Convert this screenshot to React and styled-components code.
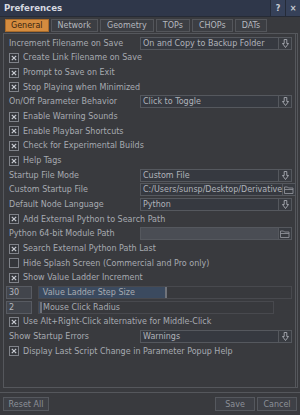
import React from 'react';
import styled, { createGlobalStyle } from 'styled-components';

const GlobalStyle = createGlobalStyle`
  html, body {
    margin: 0;
    padding: 0;
    background: #393a3e;
  }
  * {
    box-sizing: border-box;
  }
`;

const Window = styled.div`
  width: 300px;
  height: 415px;
  display: flex;
  flex-direction: column;
  background: #393a3e;
  font-family: 'DejaVu Sans', Verdana, sans-serif;
  font-size: 8px;
  color: #aeb1b8;
  overflow: hidden;
`;

const TitleBar = styled.div`
  height: 17px;
  display: flex;
  align-items: stretch;
  background: #2f374a;
  border-bottom: 1px solid #262b36;
`;

const Title = styled.div`
  flex: 1;
  display: flex;
  align-items: center;
  padding-left: 4px;
  font-size: 8.6px;
  font-weight: bold;
  color: #d6d9e0;
`;

const TitleButton = styled.div`
  width: 15px;
  display: flex;
  align-items: center;
  justify-content: center;
  background: #364159;
  border-left: 1px solid #252b38;
  color: #c9ccd3;
  font-weight: bold;
  font-size: 8px;
`;

const TabBar = styled.div`
  display: flex;
  gap: 2px;
  padding: 2px 5px 1px;
`;

const Tab = styled.div`
  height: 13px;
  padding: 0 ${({ $active }) => ($active ? 5 : 6)}px;
  display: flex;
  align-items: center;
  border: 1px solid ${({ $active }) => ($active ? '#a86a2a' : '#54565b')};
  background: ${({ $active }) => ($active ? '#d48c3f' : '#3c3e43')};
  color: ${({ $active }) => ($active ? '#3a2410' : '#b5b8bf')};
`;

const Panel = styled.div`
  flex: 1;
  margin: 0 2px 0 3px;
  padding: 2px 3px 0 5px;
  border: 1px solid #55575c;
  border-right-width: 3px;
  border-right-style: double;
  display: flex;
  flex-direction: column;
`;

const Row = styled.div`
  height: 14.67px;
  display: grid;
  grid-template-columns: 131px 1fr;
  align-items: center;
  white-space: nowrap;
`;

const CheckRow = styled.div`
  height: 14.67px;
  display: flex;
  align-items: center;
  gap: 4px;
  white-space: nowrap;
`;

const Label = styled.span`
  color: #a7aab1;
`;

const Box = styled.span`
  width: 10px;
  height: 10px;
  border: 1px solid #7f8289;
  background: #34363b;
  display: flex;
  align-items: center;
  justify-content: center;
`;

const Field = styled.div`
  height: 13px;
  display: flex;
  border: 1px solid #55585e;
  background: ${({ $light }) => ($light ? '#4a4d54' : '#363940')};
  color: #b0b3ba;
`;

const FieldText = styled.div`
  flex: 1;
  padding-left: 2px;
  display: flex;
  align-items: center;
  overflow: hidden;
`;

const FieldButton = styled.div`
  width: 13px;
  display: flex;
  align-items: center;
  justify-content: center;
  border-left: 1px solid #55585e;
  background: #383b41;
`;

const LadderRow = styled.div`
  height: 14.67px;
  display: flex;
  align-items: center;
  gap: 6px;
  margin-left: -3px;
`;

const NumBox = styled.div`
  width: 26px;
  height: 13px;
  border: 1px solid #585b62;
  background: #42454c;
  display: flex;
  align-items: center;
  padding-left: 2px;
  color: #b3b6bd;
`;

const Slider = styled.div`
  position: relative;
  height: 13px;
  width: ${({ $width }) => $width}px;
  border: 1px solid #48494e;
  background: #38393d;
  display: flex;
  align-items: center;
`;

const SliderFill = styled.div`
  position: absolute;
  left: 0;
  top: 0;
  bottom: 0;
  background: #3b4a5f;
  border-right: 2px solid #70737a;
`;

const SliderLabel = styled.span`
  position: relative;
  padding-left: 4px;
  color: #a7aab1;
`;

const Footer = styled.div`
  margin-top: 4px;
  border-top: 1px solid #55575c;
  height: 23px;
  display: flex;
  align-items: center;
  padding: 0 3px;
  gap: 2px;
`;

const Button = styled.div`
  height: 14px;
  width: ${({ $width }) => $width}px;
  display: flex;
  align-items: center;
  justify-content: center;
  border: 1px solid #55585e;
  background: #3e4046;
  color: #8c9098;
`;

const Spacer = styled.div`
  flex: 1;
`;

function Cross() {
  return (
    <svg width="6" height="6" viewBox="0 0 6 6">
      <path d="M0.8 0.8 L5.2 5.2 M5.2 0.8 L0.8 5.2" stroke="#c9ccd3" strokeWidth="1.2" />
    </svg>
  );
}

function DownArrow() {
  return (
    <svg width="7" height="9" viewBox="0 0 7 9">
      <path
        d="M2.2 0.5 H4.8 V4.5 H6.5 L3.5 8.5 L0.5 4.5 H2.2 Z"
        fill="none"
        stroke="#a9acb3"
        strokeWidth="0.9"
      />
    </svg>
  );
}

function Folder() {
  return (
    <svg width="10" height="8" viewBox="0 0 10 8">
      <path
        d="M0.5 1 H3.5 L4.5 2 H9 V7.5 H0.5 Z M0.5 3.5 H9"
        fill="none"
        stroke="#8e9198"
        strokeWidth="0.9"
      />
    </svg>
  );
}

function Check({ checked = true, children }) {
  return (
    <CheckRow>
      <Box>{checked && <Cross />}</Box>
      <Label>{children}</Label>
    </CheckRow>
  );
}

function Menu({ label, value }) {
  return (
    <Row>
      <Label>{label}</Label>
      <Field>
        <FieldText>{value}</FieldText>
        <FieldButton>
          <DownArrow />
        </FieldButton>
      </Field>
    </Row>
  );
}

function FileField({ label, value, light }) {
  return (
    <Row>
      <Label>{label}</Label>
      <Field $light={light}>
        <FieldText>{value}</FieldText>
        <FieldButton>
          <Folder />
        </FieldButton>
      </Field>
    </Row>
  );
}

function Ladder({ value, label, width, fill }) {
  return (
    <LadderRow>
      <NumBox>{value}</NumBox>
      <Slider $width={width}>
        <SliderFill style={{ width: fill }} />
        <SliderLabel>{label}</SliderLabel>
      </Slider>
    </LadderRow>
  );
}

const tabs = ['General', 'Network', 'Geometry', 'TOPs', 'CHOPs', 'DATs'];

export default function App() {
  return (
    <>
      <GlobalStyle />
      <Window>
        <TitleBar>
          <Title>Preferences</Title>
          <TitleButton>?</TitleButton>
          <TitleButton>×</TitleButton>
        </TitleBar>
        <TabBar>
          {tabs.map((t, i) => (
            <Tab key={t} $active={i === 0}>
              {t}
            </Tab>
          ))}
        </TabBar>
        <Panel>
          <Menu label="Increment Filename on Save" value="On and Copy to Backup Folder" />
          <Check>Create Link Filename on Save</Check>
          <Check>Prompt to Save on Exit</Check>
          <Check>Stop Playing when Minimized</Check>
          <Menu label="On/Off Parameter Behavior" value="Click to Toggle" />
          <Check>Enable Warning Sounds</Check>
          <Check>Enable Playbar Shortcuts</Check>
          <Check>Check for Experimental Builds</Check>
          <Check>Help Tags</Check>
          <Menu label="Startup File Mode" value="Custom File" />
          <FileField label="Custom Startup File" value="C:/Users/sunsp/Desktop/Derivative" />
          <Menu label="Default Node Language" value="Python" />
          <Check>Add External Python to Search Path</Check>
          <FileField label="Python 64-bit Module Path" value="" light />
          <Check>Search External Python Path Last</Check>
          <Check checked={false}>Hide Splash Screen (Commercial and Pro only)</Check>
          <Check>Show Value Ladder Increment</Check>
          <Ladder value="30" label="Value Ladder Step Size" width={256} fill={128} />
          <Ladder value="2" label="Mouse Click Radius" width={236} fill={3} />
          <Check>Use Alt+Right-Click alternative for Middle-Click</Check>
          <Menu label="Show Startup Errors" value="Warnings" />
          <Check>Display Last Script Change in Parameter Popup Help</Check>
        </Panel>
        <Footer>
          <Button $width={46}>Reset All</Button>
          <Spacer />
          <Button $width={40}>Save</Button>
          <Button $width={40}>Cancel</Button>
        </Footer>
      </Window>
    </>
  );
}
